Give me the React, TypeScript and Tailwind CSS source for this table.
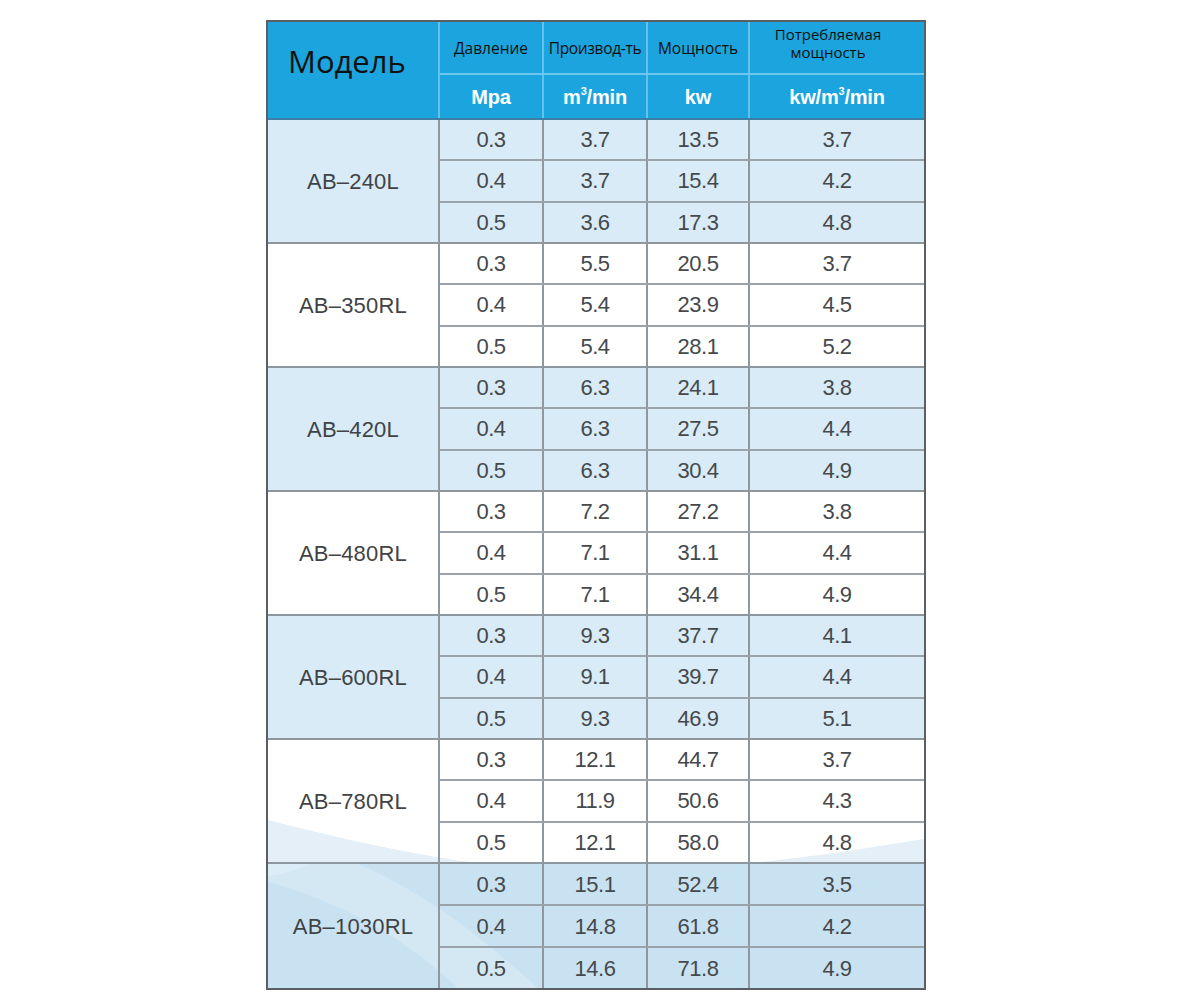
import React from "react";

type Group = { model: string; rows: [string, string, string, string][] };

const groups: Group[] = [
  { model: "AB-240L", rows: [["0.3", "3.7", "13.5", "3.7"], ["0.4", "3.7", "15.4", "4.2"], ["0.5", "3.6", "17.3", "4.8"]] },
  { model: "AB-350RL", rows: [["0.3", "5.5", "20.5", "3.7"], ["0.4", "5.4", "23.9", "4.5"], ["0.5", "5.4", "28.1", "5.2"]] },
  { model: "AB-420L", rows: [["0.3", "6.3", "24.1", "3.8"], ["0.4", "6.3", "27.5", "4.4"], ["0.5", "6.3", "30.4", "4.9"]] },
  { model: "AB-480RL", rows: [["0.3", "7.2", "27.2", "3.8"], ["0.4", "7.1", "31.1", "4.4"], ["0.5", "7.1", "34.4", "4.9"]] },
  { model: "AB-600RL", rows: [["0.3", "9.3", "37.7", "4.1"], ["0.4", "9.1", "39.7", "4.4"], ["0.5", "9.3", "46.9", "5.1"]] },
  { model: "AB-780RL", rows: [["0.3", "12.1", "44.7", "3.7"], ["0.4", "11.9", "50.6", "4.3"], ["0.5", "12.1", "58.0", "4.8"]] },
  { model: "AB-1030RL", rows: [["0.3", "15.1", "52.4", "3.5"], ["0.4", "14.8", "61.8", "4.2"], ["0.5", "14.6", "71.8", "4.9"]] },
];

// groups 5 and 6 are transparent: their fill comes from the background wave drawing
const bgFor = (i: number) => {
  if (i >= 5) return "bg-transparent";
  return i % 2 === 0 ? "bg-[#d8ebf6]" : "bg-white";
};

const colW = ["w-[104px]", "w-[104px]", "w-[102px]", "flex-1"];

const cyr = { fontFamily: '"Open Sans", "Noto Sans", sans-serif' };

export default function App() {
  return (
    <div className="w-[1200px] h-[1000px] bg-white pt-[20px] pl-[266px]" style={{ fontFamily: '"Liberation Sans", Arial, sans-serif' }}>
      <div className="relative isolate w-[660px] border-2 border-[#5a5f63] bg-white flex flex-col">
        {/* background decoration behind the lower rows */}
        <svg
          className="pointer-events-none absolute left-0 top-[718px] -z-10"
          width="656"
          height="248"
          viewBox="0 0 656 248"
        >
          <path d="M0,80 C70,98 140,114 215,124 L470,124 C550,117 605,107 656,99 L656,124 L0,124 Z" fill="#e4eff7" />
          <rect x="0" y="124" width="656" height="124" fill="#c9e2f1" />
          <path d="M0,124 L90,124 C150,150 200,185 270,248 L190,248 C140,200 70,160 0,142 Z" fill="#d4e8f4" />
          <path d="M0,124 L40,124 C30,130 15,134 0,136 Z" fill="#dcedf7" />
        </svg>
        {/* Header */}
        <div className="flex h-[98px] bg-[#1ba4dd] border-b-2 border-[#3d7fa3]">
          <div className="w-[172px] border-r-2 border-[#62c3ea] flex items-start justify-start pl-[20px] pt-[24px]">
            <span className="text-[31px] text-[#111] leading-none" style={cyr}>Модель</span>
          </div>
          <div className="flex-1 flex flex-col">
            <div className="h-[53px] flex border-b-2 border-[#6cc7ec]" style={cyr}>
              <div className="w-[104px] border-r-2 border-[#62c3ea] flex items-center justify-center text-[15.5px] text-[#111] pt-[2px] whitespace-nowrap">Давление</div>
              <div className="w-[104px] border-r-2 border-[#62c3ea] flex items-center justify-center text-[15.5px] text-[#111] pt-[2px] whitespace-nowrap tracking-[-0.3px]">Производ-ть</div>
              <div className="w-[102px] border-r-2 border-[#62c3ea] flex items-center justify-center text-[15.5px] text-[#111] pt-[2px] whitespace-nowrap">Мощность</div>
              <div className="flex-1 flex flex-col items-center justify-start pt-[3px] pr-[18px] text-[15px] leading-[18px] text-[#111]">
                <span>Потребляемая</span>
                <span>мощность</span>
              </div>
            </div>
            <div className="flex-1 flex text-white font-bold text-[20px] tracking-[-0.2px]">
              <div className="w-[104px] border-r-2 border-[#62c3ea] flex items-center justify-center">Mpa</div>
              <div className="w-[104px] border-r-2 border-[#62c3ea] flex items-center justify-center">
                <span>
                  m<sup className="text-[11px] -top-[9px]">3</sup>/min
                </span>
              </div>
              <div className="w-[102px] border-r-2 border-[#62c3ea] flex items-center justify-center">kw</div>
              <div className="flex-1 flex items-center justify-center">
                <span>
                  kw/m<sup className="text-[11px] -top-[9px]">3</sup>/min
                </span>
              </div>
            </div>
          </div>
        </div>
        {/* Body */}
        {groups.map((g, gi) => (
          <div key={g.model} className={`flex h-[124px] ${bgFor(gi)} ${gi < groups.length - 1 ? "border-b-2 border-[#8e979d]" : ""}`}>
            <div className="w-[172px] border-r-2 border-[#8e979d] flex items-center justify-center text-[22px] text-[#3f4346] tracking-[0.2px]">
              {g.model.replace("-", "\u2013")}
            </div>
            <div className="flex-1 flex flex-col">
              {g.rows.map((r, ri) => (
                <div key={ri} className={`flex-1 flex ${ri < 2 ? "border-b-2 border-[#9aa3a9]" : ""}`}>
                  {r.map((v, ci) => (
                    <div
                      key={ci}
                      className={`${colW[ci]} ${ci < 3 ? "border-r-2 border-[#8e979d]" : ""} flex items-center justify-center text-[22px] text-[#45494c] tracking-[-0.5px]`}
                    >
                      {v}
                    </div>
                  ))}
                </div>
              ))}
            </div>
          </div>
        ))}
      </div>
    </div>
  );
}
